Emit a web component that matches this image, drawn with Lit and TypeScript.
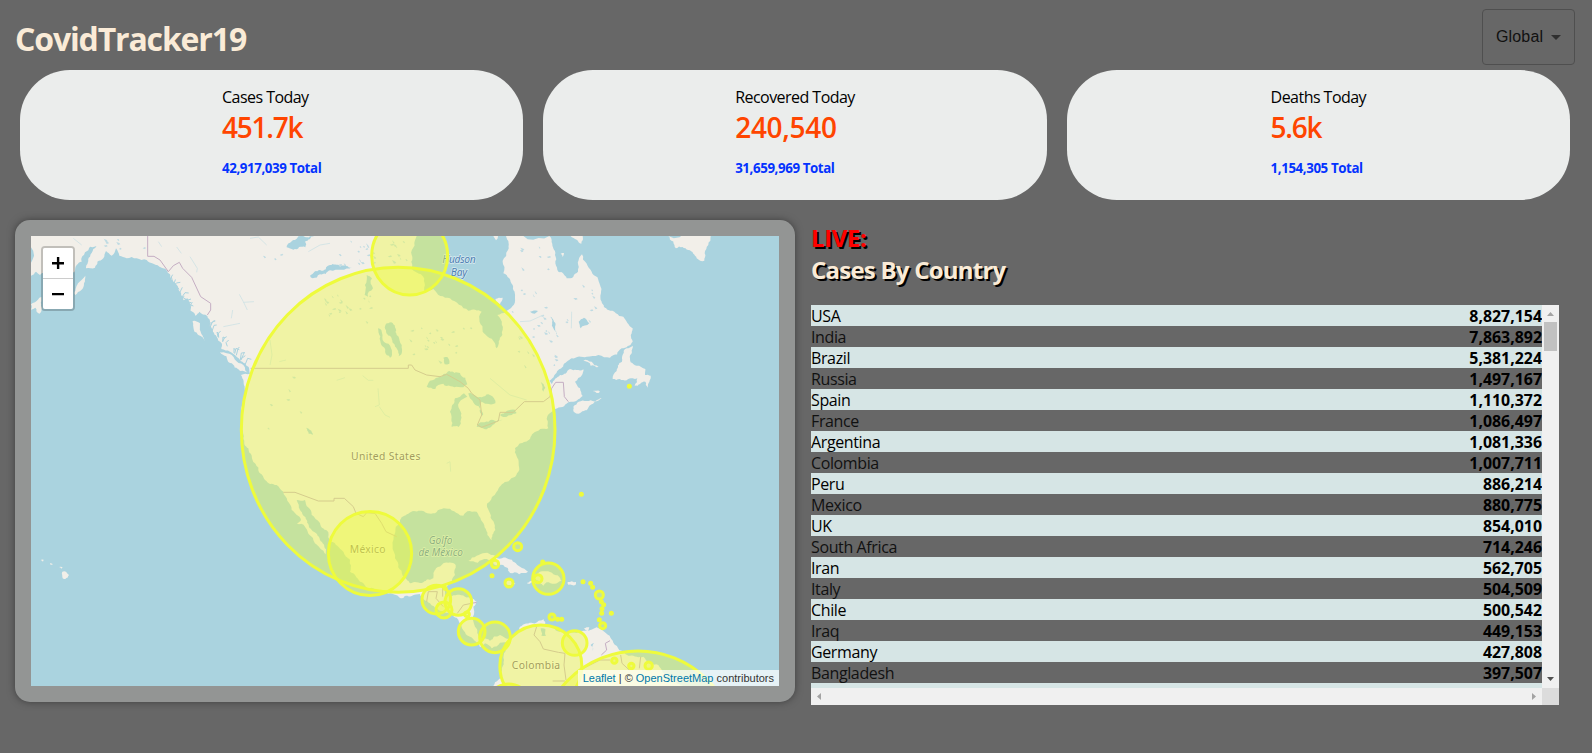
import { LitElement, html, svg, css } from "lit";
import { customElement, property } from "lit/decorators.js";
import { styleMap } from "lit/directives/style-map.js";

type Pt = [number, number];

/* Small deterministic generator, so the coastline detail is stable. */
function seeded(seed: number) {
  let s = seed;
  return () => {
    s = (s * 1664525 + 1013904223) % 4294967296;
    return s / 4294967296;
  };
}

function parse(points: string): Pt[] {
  return points.trim().split(/\s+/).map((p) => p.split(",").map(Number) as Pt);
}

/* Subdivides an outline and displaces the new points slightly. */
function coast(points: string, amount = 0.15, seed = 7): string {
  const rnd = seeded(seed);
  let pts = parse(points);
  for (let pass = 0; pass < 3; pass++) {
    const out: Pt[] = [];
    pts.forEach((a, i) => {
      const b = pts[(i + 1) % pts.length];
      out.push(a);
      const dx = b[0] - a[0];
      const dy = b[1] - a[1];
      const len = Math.hypot(dx, dy);
      if (len > 8 && len < 160) {
        const k = (rnd() - 0.5) * 2 * amount;
        out.push([a[0] + dx / 2 - dy * k, a[1] + dy / 2 + dx * k]);
      }
    });
    pts = out;
  }
  return "M" + pts.map((p) => `${p[0].toFixed(1)} ${p[1].toFixed(1)}`).join("L") + "Z";
}

const MAINLAND = `63,63 63,182 78,170 90,180 110,160 150,170 193,172 200,150 215,140 225,112 240,95 268,86 250,102 240,125 228,160 255,158 262,140 280,130 288,108 305,122 318,100 328,122 350,130 380,130 410,135 430,146 455,158 480,178 496,205 506,225 520,256 532,250 540,285 556,302 568,290 592,303 600,335 620,365 635,385 634,402 660,410 690,436 716,456 720,476 693,480 704,520 698,560 699,600 697,640 700,672 715,700 735,745 750,775 765,795 800,810 820,830 832,857 845,885 873,915 860,925 885,935 905,965 930,1000 947,1018 948,1003 930,975 905,945 890,915 870,885 860,855 885,855 905,900 930,925 955,952 962,980 1000,1010 1020,1035 1020,1070 1050,1100 1090,1120 1130,1134 1172,1150 1205,1143 1230,1137 1260,1165 1310,1193 1340,1208 1355,1235 1380,1265 1398,1280 1410,1297 1425,1285 1445,1300 1470,1283 1496,1285 1482,1335 1475,1385 1455,1402 1450,1413 2020,1413 1975,1390 1945,1350 1900,1325 1860,1322 1828,1306 1810,1283 1780,1248 1760,1237 1720,1247 1700,1254 1670,1252 1630,1238 1608,1232 1600,1212 1570,1225 1530,1235 1510,1262 1495,1272 1470,1260 1440,1278 1415,1270 1395,1235 1390,1175 1400,1160 1365,1145 1320,1147 1305,1140 1310,1115 1335,1080 1337,1050 1300,1045 1278,1060 1270,1090 1240,1102 1200,1105 1178,1082 1155,1030 1155,955 1170,920 1195,896 1230,887 1275,895 1295,882 1320,881 1345,896 1360,902 1372,889 1400,890 1413,915 1432,960 1446,976 1456,945 1440,895 1432,865 1460,830 1490,800 1525,770 1526,745 1515,700 1545,680 1570,655 1615,640 1610,612 1635,582 1675,562 1690,560 1718,543 1710,520 1695,500 1716,480 1720,463 1680,462 1650,480 1625,507 1618,497 1645,465 1670,440 1685,430 1730,425 1800,428 1835,400 1868,380 1868,340 1840,305 1795,285 1775,260 1770,210 1745,170 1716,118 1704,170 1670,190 1645,170 1635,120 1625,75 1618,63 1488,63 1494,105 1480,175 1508,210 1515,250 1488,290 1462,300 1477,360 1460,400 1435,367 1418,350 1415,290 1375,287 1320,250 1270,222 1245,230 1235,180 1205,160 1205,120 1220,63`;

const ISLANDS: string[] = [
  "630,412 650,415 700,450 718,476 690,468 660,444",
  "548,318 570,325 572,350 586,379 565,360 550,335",
  "1693,592 1690,575 1706,560 1730,558 1775,549 1745,568 1722,588 1705,596",
  "1868,392 1850,400 1836,440 1820,468 1808,492 1850,496 1868,490 1882,490 1874,512 1906,500 1914,518 1922,482 1905,480 1906,462 1880,452 1862,442 1860,430",
  "1720,437 1745,440 1766,456 1742,452",
  "1975,63 1998,100 2035,105 2060,130 2083,137 2084,115 2102,63",
  "1375,1038 1400,1022 1450,1020 1476,1030 1495,1032 1530,1055 1554,1070 1500,1074 1480,1050 1430,1032",
  "1550,1104 1592,1100 1570,1085 1585,1074 1630,1078 1655,1098 1610,1102 1600,1112 1588,1104",
  "1673,1101 1698,1101 1697,1109 1675,1109",
  "1482,1100 1496,1096 1516,1106 1494,1110",
  "63,268 75,262 94,246 96,280 88,296 76,278 63,284",
  "196,240 204,205 226,182 222,205 214,225",
  "157,1070 168,1070 177,1080 166,1092 158,1090",
  "92,1035 101,1034 99,1040",
  "120,1044 129,1048 122,1050",
  "147,1056 158,1057 154,1061",
  "1748,528 1770,530 1760,534",
  "1450,63 1464,63 1458,76",
  "1682,63 1718,63 1714,86 1700,74",
  "1652,116 1662,114 1658,126",
  "1456,252 1478,248 1470,268 1460,262",
  "1722,1240 1738,1237 1734,1249",
];

const LAKES: string[] = [
  "1130,325 1148,324 1160,360 1176,410 1166,424 1150,385 1132,358",
  "1104,340 1114,345 1118,375 1146,420 1140,428 1114,390",
  "1250,515 1290,485 1318,468 1350,474 1372,508 1345,516 1300,506 1276,522",
  "1362,535 1335,550 1320,590 1325,636 1346,636 1352,590 1348,562 1372,545",
  "1375,535 1400,545 1440,540 1456,565 1430,566 1414,560 1418,602 1396,570",
  "1400,636 1440,616 1478,614 1440,638",
  "1470,600 1515,584 1520,594 1480,606",
  "900,182 930,165 960,150 990,155 1026,156 960,166 930,178 908,190",
  "830,97 855,75 880,63 912,63 885,80 886,97 850,104",
  "1070,180 1086,190 1074,245 1064,240",
  "1300,428 1312,426 1318,446 1304,448",
  "888,638 900,645 908,660 896,656",
  "1706,320 1722,308 1738,325 1712,340",
  "1560,290 1584,288 1574,296",
  "1620,305 1632,320 1640,360 1630,340",
  "1592,500 1606,518 1600,530",
  "1592,1240 1606,1242 1608,1262 1594,1262",
  "1742,1290 1752,1284 1748,1308",
];

const RIVERS = [
  "M688 238L700 260 712 285M700 262L732 260",
  "M1058 482L1075 496 1090 496M980 496L1005 488",
  "M1104 520L1108 570 1095 575M1108 575L1125 600 1140 607",
  "M780 375L786 420 780 450M808 440L828 435",
  "M500 96L514 115M540 125L562 160 560 172",
  "M720 70L745 66 770 90M895 110L930 90 960 85",
  "M1440 490L1500 540 1550 555M1310 745L1320 740 1322 770",
  "M640 335L690 325M668 285L664 310",
  "M190 70L215 90M445 80L455 95",
  "M1530 320L1560 318 1600 300M1685 290L1684 340",
];

const BORDERS = [
  "M413 63V124H432L450 135 475 170 490 152 508 142 518 160 545 187 572 245 602 265V285L592 300",
  "M722 460H1195V450H1205L1215 465 1250 480 1290 485 1310 478 1350 500 1375 520 1385 535 1410 555 1415 600 1402 630 1415 637 1465 618 1470 592H1510L1543 560H1600L1620 545 1625 520 1637 502H1660L1663 545 1675 560",
  "M820 832H855L925 858H972V850H1003L1030 875 1038 895 1060 905 1070 893 1095 895 1115 925 1128 950 1160 965",
  "M1250 1160L1255 1130H1282L1278 1150 1300 1175M1342 1195L1360 1170 1400 1162M1298 1110V1145",
  "M1580 1235L1572 1260 1590 1280 1600 1302 1645 1312 1665 1315 1662 1350 1668 1395M1628 1398H1665",
  "M1800 1277L1786 1285 1790 1305 1774 1320M1720 1360L1770 1335 1800 1335M1832 1320L1836 1345 1858 1365M1892 1325L1888 1360",
];

/* Circle markers: centre and radii in map units. */
const AREAS: [number, number, number, number][] = [
  [1164.500, 644.5, 470.500, 487.5],
  [1199, 122, 114, 118],
  [1080, 1015.5, 125, 126],
  [1592.5, 1353, 123, 123],
  [1884, 1603, 295, 295],
  [1694, 1284, 37, 37],
  [1615, 1091, 47, 47],
  [1279, 1154, 43, 43],
  [1345, 1161, 40, 40],
  [1302, 1185, 24, 24],
  [1385, 1250, 40, 40],
  [1455, 1267, 46, 46],
  [1496, 1473, 66, 66],
  [1584, 1091, 12, 12],
  [1497, 1104, 12, 12],
  [1523, 995, 12, 12],
  [1455, 1047, 11, 11],
  [1626, 1206, 9, 9],
  [1768, 1140, 12, 12],
  [1778, 1232, 9, 9],
  [1371, 1198, 7, 7],
  [1813, 1337, 8, 8],
  [1864, 1353, 8, 8],
  [1916, 1352, 11, 11],
];

const DOTS: [number, number][] = [
  [1446, 1082], [1598, 1041], [1305, 1120], [1643, 1213], [1655, 1213],
  [1719, 1100], [1742, 1105], [1748, 1117], [1774, 1160], [1781, 1169],
  [1776, 1181], [1775, 1195], [1804, 1195], [1768, 1214], [1714, 838],
  [1858, 514],
];

/* Scattered ponds of the Canadian shield and Quebec. */
function ponds(): string {
  const rnd = seeded(41);
  const zones = [
    [950, 75, 1090, 150, 18],
    [940, 230, 1080, 320, 22],
    [1185, 300, 1400, 440, 22],
    [1130, 70, 1200, 140, 10],
    [1520, 300, 1650, 460, 22],
    [1500, 90, 1640, 290, 14],
    [1660, 200, 1760, 330, 10],
    [740, 470, 960, 680, 6],
    [200, 66, 400, 110, 8],
    [740, 90, 820, 150, 3],
  ];
  let d = "";
  for (const [x1, y1, x2, y2, n] of zones) {
    for (let i = 0; i < n; i++) {
      const x = x1 + rnd() * (x2 - x1);
      const y = y1 + rnd() * (y2 - y1);
      const w = 2 + rnd() * 8;
      const h = (rnd() - 0.5) * 10;
      d += `M${x.toFixed(0)} ${y.toFixed(0)}l${w.toFixed(0)} ${h.toFixed(0)}l3 4l-${(w * 0.7).toFixed(0)} 2z`;
    }
  }
  return d;
}

/* Channels and fjords along the Pacific coast. */
function fjords(): string {
  const rnd = seeded(19);
  let d = "";
  const line = parse("490,190 510,225 530,260 550,285 600,325 625,355 655,385 690,420 712,445");
  for (let i = 0; i < line.length - 1; i++) {
    for (let k = 0; k < 4; k++) {
      const t = rnd();
      const x = line[i][0] + (line[i + 1][0] - line[i][0]) * t;
      const y = line[i][1] + (line[i + 1][1] - line[i][1]) * t;
      d += `M${(x - 6).toFixed(0)} ${(y + 6).toFixed(0)}l${((rnd() - 0.3) * 16).toFixed(0)} -${(4 + rnd() * 18).toFixed(0)}l${(rnd() * 12).toFixed(0)} ${((rnd() - 0.5) * 16).toFixed(0)}`;
    }
  }
  return d;
}

@customElement("case-map")
export class CaseMap extends LitElement {
  static styles = css`
    :host {
      display: block;
      position: relative;
      height: 450px;
      overflow: hidden;
      background: #aad3df;
    }
    svg { display: block; }
    .canvas { width: 100%; height: 100%; }
    .land { fill: #f2efe9; }
    .lake { fill: #aad3df; }
    .pond { fill: #aad3df; opacity: 0.7; }
    .river { fill: none; stroke: #cfe2e4; stroke-width: 2.5; }
    .channel { fill: none; stroke: #aad3df; stroke-width: 3; }
    .border { fill: none; stroke: #c5aec3; stroke-width: 3; }
    .name {
      font: 31px "Noto Sans", sans-serif;
      fill: #6f5c78;
      stroke: #fbfaf6;
      stroke-width: 4;
      paint-order: stroke;
      text-anchor: middle;
    }
    .sea { font-style: italic; font-size: 31px; fill: #4d80b3; stroke: #d9ebf0; }
    .gulf { font-size: 30px; }
    .area { fill: #eefb3c; fill-opacity: 0.4; stroke: #eefb3c; stroke-width: 9; }
    .dot { fill: #eefb3c; }
    .zoom {
      position: absolute;
      left: 10px;
      top: 10px;
      border: 2px solid rgba(0, 0, 0, 0.2);
      border-radius: 4px;
      background-clip: padding-box;
      overflow: hidden;
    }
    .btn {
      display: flex;
      align-items: center;
      justify-content: center;
      width: 30px;
      height: 30px;
      background: #fff;
    }
    .btn + .btn { border-top: 1px solid #ccc; }
    .credit {
      position: absolute;
      right: 0;
      bottom: 0;
      padding: 0 5px;
      height: 16px;
      font: 11px/16px "Liberation Sans", Arial, sans-serif;
      color: #333;
      background: rgba(255, 255, 255, 0.7);
      white-space: nowrap;
    }
    .link { color: #0078a8; }
  `;

  render() {
    return html`
      <svg class="canvas" viewBox="63 63 2244 1350" preserveAspectRatio="none">
        <path class="land" d=${coast(MAINLAND)}></path>
        ${ISLANDS.map((p, i) => svg`<path class="land" d=${coast(p, 0.18, i + 3)}></path>`)}
        <path class="channel" d=${fjords()}></path>
        <path class="pond" d=${ponds()}></path>
        ${RIVERS.map((d) => svg`<path class="river" d=${d}></path>`)}
        ${LAKES.map((p, i) => svg`<path class="lake" d=${coast(p, 0.2, i + 11)}></path>`)}
        ${BORDERS.map((d) => svg`<path class="border" d=${d}></path>`)}
        <text class="name" x="1127" y="735" textLength="208">United States</text>
        <text class="name" x="1073" y="1014" textLength="107">México</text>
        <text class="name" x="1578" y="1361" textLength="145">Colombia</text>
        <text class="name sea" x="1347" y="145" textLength="101">Hudson</text>
        <text class="name sea" x="1347" y="182" textLength="49">Bay</text>
        <text class="name sea gulf" x="1292" y="986" textLength="71">Golfo</text>
        <text class="name sea gulf" x="1292" y="1022" textLength="133">de México</text>
        ${AREAS.map(([x, y, rx, ry]) => svg`<ellipse class="area" cx=${x} cy=${y} rx=${rx} ry=${ry}></ellipse>`)}
        ${DOTS.map(([x, y]) => svg`<circle class="dot" cx=${x} cy=${y} r="7.5"></circle>`)}
      </svg>
      <div class="zoom">
        <div class="btn">
          <svg width="12" height="12" viewBox="0 0 12 12"><path d="M0 5h12v2.4H0zM4.9 0h2.4v12H4.9z"></path></svg>
        </div>
        <div class="btn">
          <svg width="12" height="12" viewBox="0 0 12 12"><path d="M0 5h12v2.3H0z"></path></svg>
        </div>
      </div>
      <div class="credit"><span class="link">Leaflet</span> | © <span class="link">OpenStreetMap</span> contributors</div>
    `;
  }
}

@customElement("stat-card")
export class StatCard extends LitElement {
  @property() label = "";
  @property() value = "";
  @property() total = "";

  static styles = css`
    :host {
      display: flex;
      justify-content: center;
      height: 130px;
      box-sizing: border-box;
      padding-top: 16px;
      border-radius: 50px;
      background: #ebedec;
    }
    .label { font-size: 16px; line-height: 23px; color: #000; letter-spacing: -0.54px; }
    .value { font-size: 28px; line-height: 36px; font-weight: 600; color: #ff4500; }
    .total { margin-top: 13px; font-size: 13.3px; line-height: 20px; font-weight: 700; color: #0433ff; letter-spacing: -0.4px; }
  `;

  render() {
    /* Abbreviated values are set tighter than full numbers. */
    const tracking = this.value.endsWith("k") ? -1.25 : -0.3;
    return html`<div>
      <div class="label">${this.label}</div>
      <div class="value" style=${styleMap({ letterSpacing: `${tracking}px` })}>${this.value}</div>
      <div class="total">${this.total} Total</div>
    </div>`;
  }
}

const COUNTRIES: [string, string][] = [
  ["USA", "8,827,154"], ["India", "7,863,892"], ["Brazil", "5,381,224"],
  ["Russia", "1,497,167"], ["Spain", "1,110,372"], ["France", "1,086,497"],
  ["Argentina", "1,081,336"], ["Colombia", "1,007,711"], ["Peru", "886,214"],
  ["Mexico", "880,775"], ["UK", "854,010"], ["South Africa", "714,246"],
  ["Iran", "562,705"], ["Italy", "504,509"], ["Chile", "500,542"],
  ["Iraq", "449,153"], ["Germany", "427,808"], ["Bangladesh", "397,507"],
];

@customElement("country-table")
export class CountryTable extends LitElement {
  static styles = css`
    :host {
      display: grid;
      grid-template: 383px 17px / 1fr 17px;
      width: 748px;
    }
    .rows { overflow: hidden; }
    .row {
      display: flex;
      justify-content: space-between;
      height: 21px;
      font-size: 16px;
      line-height: 23px;
      color: #000;
    }
    .row:nth-child(odd) { background: #d6e5e5; }
    .name { letter-spacing: -0.38px; }
    .row:nth-child(even) .name { color: #111; }
    .count { font-size: 15.9px; font-weight: 700; }
    .bar { display: flex; justify-content: space-between; align-items: center; background: #f0f0f0; }
    .vertical { flex-direction: column; }
    .thumb { width: 13px; height: 29px; background: #c1c1c1; }
    .space { flex: 1; }
    .corner { background: #dcdcdc; }
    svg { display: block; }
    .dim { fill: #a3a3a3; }
    .dark { fill: #505050; }
  `;

  render() {
    return html`
      <div class="rows">
        ${COUNTRIES.map(([n, c]) => html`<div class="row"><span class="name">${n}</span><span class="count">${c}</span></div>`)}
        <div class="row"></div>
      </div>
      <div class="bar vertical">
        <svg width="17" height="17"><path class="dim" d="M5 11l3.5-4 3.5 4z"></path></svg>
        <div class="thumb"></div>
        <div class="space"></div>
        <svg width="17" height="17"><path class="dark" d="M5 6h7L8.500 10z"></path></svg>
      </div>
      <div class="bar">
        <svg width="17" height="17"><path class="dim" d="M10 5v7L6 8.500z"></path></svg>
        <svg width="17" height="17"><path class="dim" d="M7 5v7l4-3.500z"></path></svg>
      </div>
      <div class="corner"></div>
    `;
  }
}

@customElement("app-root")
export class AppRoot extends LitElement {
  static styles = css`
    :host {
      display: block;
      height: 753px;
      overflow: hidden;
      background: #676767;
      font-family: "Open Sans", "Noto Sans", sans-serif;
    }
    header {
      display: flex;
      justify-content: space-between;
      align-items: flex-start;
      height: 70px;
      box-sizing: border-box;
      padding: 9px 17px 0 15px;
    }
    h1 { margin: 8px 0 0; font-size: 32px; line-height: 44px; font-weight: 700; color: #faebd7; letter-spacing: -1.15px; }
    .select {
      display: flex;
      align-items: center;
      gap: 8px;
      width: 93px;
      height: 56px;
      box-sizing: border-box;
      padding-left: 13px;
      border: 1px solid #4f4f4f;
      border-radius: 4px;
      font: 16px "Liberation Sans", Arial, sans-serif;
      letter-spacing: 0.15px;
      color: #111;
    }
    .caret { fill: #2f2f2f; }
    .stats { display: grid; grid-template-columns: repeat(3, 1fr); gap: 20px; margin: 0 22px 0 20px; }
    main { display: flex; gap: 16px; padding: 20px 0 0 15px; }
    .panel {
      width: 748px;
      height: 450px;
      padding: 16px;
      border-radius: 15px;
      background: #939594;
      box-shadow: 0 0 8px -1px rgba(0, 0, 0, 0.5);
    }
    h2 { margin: 0; font-size: 24px; line-height: 32px; font-weight: 700; color: #faebd7; text-shadow: 2px 2px #000; letter-spacing: -0.77px; }
    .live { color: #f00; margin-top: 2px; letter-spacing: -0.4px; }
    .table { margin-top: 19px; }
  `;

  render() {
    return html`
      <header>
        <h1>CovidTracker19</h1>
        <div class="select">Global <svg class="caret" width="10" height="5" viewBox="0 0 10 5"><path d="M0 0h10L5 5z"></path></svg></div>
      </header>
      <section class="stats">
        <stat-card label="Cases Today" value="451.7k" total="42,917,039"></stat-card>
        <stat-card label="Recovered Today" value="240,540" total="31,659,969"></stat-card>
        <stat-card label="Deaths Today" value="5.6k" total="1,154,305"></stat-card>
      </section>
      <main>
        <div class="panel"><case-map></case-map></div>
        <section>
          <h2 class="live">LIVE:</h2>
          <h2>Cases By Country</h2>
          <div class="table"><country-table></country-table></div>
        </section>
      </main>
    `;
  }
}
